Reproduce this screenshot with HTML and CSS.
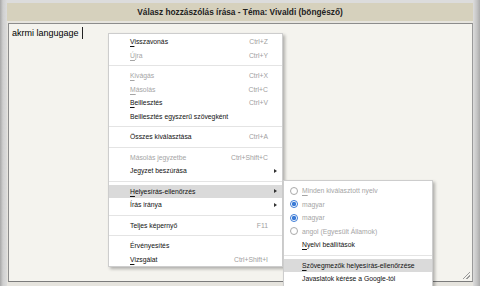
FILE: index.html
```html
<!DOCTYPE html>
<html>
<head>
    <title>Válasz hozzászólás írása</title>
    <link rel="stylesheet" href="styles.css">
</head>
<body>
<div class="page">
    <div class="title">Válasz hozzászólás írása - Téma: Vivaldi (böngésző)</div>
    <div class="panel">
        <div class="editor">akrmi langugage<span class="caret"></span>
            <div class="grip"></div>
        </div>
    </div>
</div>

<!-- context menu -->
<ul class="menu main-menu">
    <li class="item"><span><u>V</u>isszavonás</span><span class="key">Ctrl+Z</span></li>
    <li class="item off"><span><u>Ú</u>jra</span><span class="key">Ctrl+Y</span></li>
    <li class="sep"></li>
    <li class="item off"><span><u>K</u>ivágás</span><span class="key">Ctrl+X</span></li>
    <li class="item off"><span><u>M</u>ásolás</span><span class="key">Ctrl+C</span></li>
    <li class="item"><span><u>B</u>eillesztés</span><span class="key">Ctrl+V</span></li>
    <li class="item"><span>Beillesztés egyszerű szövegként</span></li>
    <li class="sep"></li>
    <li class="item"><span>Összes kiválasztása</span><span class="key">Ctrl+A</span></li>
    <li class="sep"></li>
    <li class="item off"><span>Másolás jegyzetbe</span><span class="key">Ctrl+Shift+C</span></li>
    <li class="item"><span>Jegyzet beszúrása</span><span></span><span class="arrow"></span></li>
    <li class="sep"></li>
    <li class="item hover"><span><u>H</u>elyesírás-ellenőrzés</span><span></span><span class="arrow"></span></li>
    <li class="item"><span>Írás iránya</span><span></span><span class="arrow"></span></li>
    <li class="sep"></li>
    <li class="item"><span>Teljes képernyő</span><span class="key">F11</span></li>
    <li class="sep"></li>
    <li class="item"><span>Érvényesítés</span></li>
    <li class="item"><span><u>V</u>izsgálat</span><span class="key">Ctrl+Shift+I</span></li>
</ul>

<ul class="menu sub-menu">
    <li class="item off"><span class="radio"></span><span><u>M</u>inden kiválasztott nyelv</span></li>
    <li class="item off"><span class="radio on"></span><span>magyar</span></li>
    <li class="item off"><span class="radio on"></span><span>magyar</span></li>
    <li class="item off"><span class="radio"></span><span>angol (Egyesült Államok)</span></li>
    <li class="item"><span></span><span><u>N</u>yelvi beállítások</span></li>
    <li class="sep"></li>
    <li class="item hover"><span></span><span><u>S</u>zövegmezők helyesírás-ellenőrzése</span></li>
    <li class="item"><span></span><span>Javaslatok kérése a Google-tól</span></li>
</ul>
</body>
</html>
```

FILE: styles.css
```css
* {
    box-sizing: border-box;
}

html, body {
    margin: 0;
    padding: 0;
    height: 286px;
    overflow: hidden;
}

body {
    font-family: "Liberation Sans", Arial, sans-serif;
    background: linear-gradient(90deg, #a7a7a7 0, #cfcfcf 3px, #dcdcdc 7px, #dcdcdc 473px, #c4c4c4 477px, #aaaaaa 480px);
}

.page {
    display: flex;
    flex-direction: column;
    height: 286px;
    padding: 3px 7px 0 7px;
}

.title {
    height: 18px;
    line-height: 18px;
    text-align: center;
    font-size: 8.3px;
    font-weight: bold;
    color: #22221e;
    background: #d6d1bd;
}

.panel {
    flex: 1;
    padding: 2px 0 4px 1px;
    background: #e6e4de;
}

.editor {
    position: relative;
    height: 259px;
    padding: 3px 3px;
    border: 1px solid #8c8c8c;
    border-right-color: #9a9a9a;
    border-bottom-color: #7c7c7c;
    background: #f4f3ee;
    font-size: 9px;
    color: #000;
}

.caret {
    display: inline-block;
    width: 1px;
    height: 12px;
    margin-left: 3px;
    vertical-align: -3px;
    background: #222;
}

.grip {
    position: absolute;
    right: 2px;
    bottom: 2px;
    width: 7px;
    height: 7px;
    background: linear-gradient(135deg, transparent 45%, #9a9a9a 45%, #9a9a9a 55%, transparent 55%, transparent 70%, #9a9a9a 70%, #9a9a9a 80%, transparent 80%);
}

/* menus */
.menu {
    position: absolute;
    list-style: none;
    margin: 0;
    background: #fff;
    border: 1px solid #cdcdcd;
    box-shadow: 2px 2px 3px rgba(0, 0, 0, 0.28);
    font-size: 6.8px;
    color: #111;
}

.main-menu {
    left: 108px;
    top: 33px;
    width: 175px;
    padding: 1px 0 0 0;
}

.sub-menu {
    left: 283px;
    top: 180px;
    width: 150px;
    padding: 3px 0 0 0;
}

.main-menu .item {
    display: grid;
    grid-template-columns: 1fr auto 14px;
    align-items: center;
    height: 13.5px;
    padding-left: 21px;
}

.sub-menu .item {
    display: grid;
    grid-template-columns: 18px 1fr;
    align-items: center;
    height: 13.5px;
}

.item u {
    text-decoration-thickness: 0.5px;
    text-underline-offset: 1.5px;
}

.item.off {
    color: #a5a5a5;
}

.key {
    color: #a0a0a0;
    text-align: right;
}

.item.hover {
    background: #dadada;
}

.arrow {
    justify-self: center;
    width: 0;
    height: 0;
    border-top: 2.5px solid transparent;
    border-bottom: 2.5px solid transparent;
    border-left: 3px solid #333;
}

.sep {
    height: 1px;
    margin: 3px 0;
    background: #e4e4e4;
}

.radio {
    justify-self: center;
    margin-left: 1px;
    width: 8px;
    height: 8px;
    border: 1px solid #a9a9a9;
    border-radius: 50%;
    background: #fff;
}

.radio.on {
    border-color: #3b7bd6;
    background: radial-gradient(circle, #3b7bd6 0, #3b7bd6 2px, #fff 2.3px);
}
```
